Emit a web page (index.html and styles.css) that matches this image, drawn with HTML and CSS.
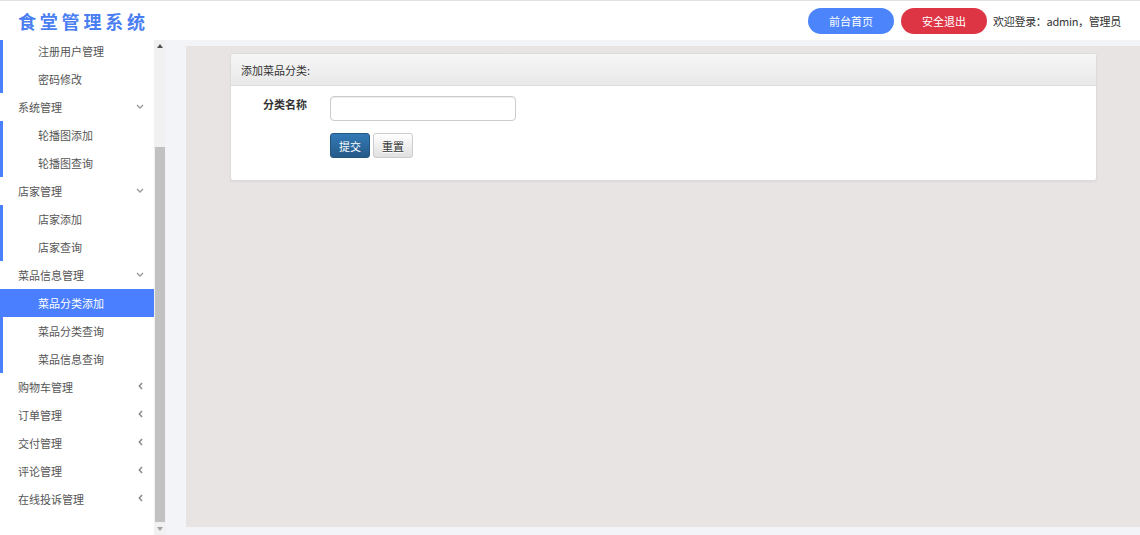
FILE: index.html
```html
<!DOCTYPE html>
<html lang="zh-CN">
<head>
<meta charset="utf-8">
<title>食堂管理系统</title>
<link rel="stylesheet" href="styles.css">
</head>
<body>
<header class="topbar">
  <div class="logo">食堂管理系统</div>
  <div class="top-right">
    <a class="pill pill-blue">前台首页</a>
    <a class="pill pill-red">安全退出</a>
    <span class="welcome">欢迎登录：admin，管理员</span>
  </div>
</header>
<div class="layout">
  <aside class="sidebar">
    <nav class="nav">
      <ul class="menu">
        <li class="group">
          <a class="sub">注册用户管理</a>
          <a class="sub">密码修改</a>
        </li>
        <li>
          <a class="top">系统管理<svg class="chev" viewBox="0 0 8 5" width="8" height="5"><path d="M1 1l3 3 3-3" fill="none" stroke="#9a9a9a" stroke-width="1.4"/></svg></a>
          <div class="group">
            <a class="sub">轮播图添加</a>
            <a class="sub">轮播图查询</a>
          </div>
        </li>
        <li>
          <a class="top">店家管理<svg class="chev" viewBox="0 0 8 5" width="8" height="5"><path d="M1 1l3 3 3-3" fill="none" stroke="#9a9a9a" stroke-width="1.4"/></svg></a>
          <div class="group">
            <a class="sub">店家添加</a>
            <a class="sub">店家查询</a>
          </div>
        </li>
        <li>
          <a class="top">菜品信息管理<svg class="chev" viewBox="0 0 8 5" width="8" height="5"><path d="M1 1l3 3 3-3" fill="none" stroke="#9a9a9a" stroke-width="1.4"/></svg></a>
          <div class="group">
            <a class="sub active">菜品分类添加</a>
            <a class="sub">菜品分类查询</a>
            <a class="sub">菜品信息查询</a>
          </div>
        </li>
        <li><a class="top">购物车管理<svg class="chev-l" viewBox="0 0 5 8" width="5" height="8"><path d="M4 1L1.3 4 4 7" fill="none" stroke="#8a8a8a" stroke-width="1.5"/></svg></a></li>
        <li><a class="top">订单管理<svg class="chev-l" viewBox="0 0 5 8" width="5" height="8"><path d="M4 1L1.3 4 4 7" fill="none" stroke="#8a8a8a" stroke-width="1.5"/></svg></a></li>
        <li><a class="top">交付管理<svg class="chev-l" viewBox="0 0 5 8" width="5" height="8"><path d="M4 1L1.3 4 4 7" fill="none" stroke="#8a8a8a" stroke-width="1.5"/></svg></a></li>
        <li><a class="top">评论管理<svg class="chev-l" viewBox="0 0 5 8" width="5" height="8"><path d="M4 1L1.3 4 4 7" fill="none" stroke="#8a8a8a" stroke-width="1.5"/></svg></a></li>
        <li><a class="top">在线投诉管理<svg class="chev-l" viewBox="0 0 5 8" width="5" height="8"><path d="M4 1L1.3 4 4 7" fill="none" stroke="#8a8a8a" stroke-width="1.5"/></svg></a></li>
      </ul>
    </nav>
    <div class="scrollbar">
      <svg class="arrow" viewBox="0 0 6 4" width="6" height="4"><path d="M0 4L3 0 6 4z" fill="#505050"/></svg>
      <div class="track"><div class="thumb"></div></div>
      <svg class="arrow" viewBox="0 0 6 4" width="6" height="4"><path d="M0 0L3 4 6 0z" fill="#a3a3a3"/></svg>
    </div>
  </aside>
  <main class="main">
    <div class="content">
      <section class="card">
        <div class="card-head">添加菜品分类:</div>
        <form class="card-body">
          <label class="label">分类名称</label>
          <input class="input" type="text">
          <div class="actions">
            <button type="button" class="btn btn-primary">提交</button>
            <button type="button" class="btn btn-default">重置</button>
          </div>
        </form>
      </section>
    </div>
  </main>
</div>
</body>
</html>
```

FILE: styles.css
```css
* { box-sizing: border-box; }
html, body { margin: 0; padding: 0; }
body {
  width: 1140px;
  height: 535px;
  overflow: hidden;
  font-family: "Noto Sans CJK SC", "Noto Sans", sans-serif;
  font-size: 11px;
  color: #333;
  background: #fff;
}
a { text-decoration: none; }

.topbar {
  height: 40px;
  border-top: 1px solid #e2e2e2;
  display: flex;
  align-items: center;
  justify-content: space-between;
  padding: 0 19px 0 18px;
  background: #fff;
}
.logo {
  font-size: 18px;
  font-weight: 700;
  letter-spacing: 3.8px;
  color: #4a7ef2;
  line-height: 1;
}
.top-right {
  display: flex;
  align-items: center;
  gap: 7px;
}
.pill {
  width: 86px;
  height: 26px;
  border-radius: 13px;
  color: #fff;
  display: flex;
  align-items: center;
  justify-content: center;
  font-size: 11px;
}
.pill-blue { background: #4c84fb; }
.pill-red { background: #de3545; }
.welcome { color: #333; font-size: 11px; letter-spacing: -0.28px; margin-left: -1px; }

.layout {
  display: flex;
  height: 495px;
}
.sidebar {
  width: 166px;
  display: flex;
  background: #fff;
}
.nav {
  width: 154px;
  overflow: hidden;
}
.menu {
  list-style: none;
  margin: -3px 0 0;
  padding: 0;
}
.menu a {
  display: flex;
  align-items: center;
  height: 28px;
  padding-bottom: 1px;
  color: #555;
  position: relative;
}
.top {
  padding-left: 18px;
}
.group {
  display: block;
  border-left: 3px solid #4a80ff;
}
.sub {
  padding-left: 35px;
  color: #666;
}
.menu a.active {
  background: #4a80ff;
  color: #fff;
  margin-left: -3px;
  padding-left: 38px;
}
.chev {
  position: absolute;
  left: 136px;
  top: 11px;
}
.chev-l {
  position: absolute;
  left: 138px;
  top: 9px;
}

.scrollbar {
  width: 12px;
  background: #f1f1f1;
  display: flex;
  flex-direction: column;
  align-items: center;
}
.arrow { margin: 4px 0; flex: none; }
.track {
  flex: 1;
  width: 100%;
  padding: 95px 1px 1px;
}
.thumb {
  width: 100%;
  height: 375px;
  background: #c1c1c1;
}

.main {
  flex: 1;
  background: #f3f4f7;
  padding: 6px 0 8px 20px;
}
.content {
  height: 100%;
  background: #e9e4e4;
  padding: 7px 43px 0 44px;
}
.card {
  background: #fff;
  border: 1px solid #dcdcdc;
  border-radius: 3px;
  box-shadow: 0 1px 2px rgba(0,0,0,0.06);
}
.card-head {
  height: 32px;
  display: flex;
  align-items: center;
  padding-left: 10px;
  background: linear-gradient(#f6f6f6, #e9e9e9);
  border-bottom: 1px solid #dcdcdc;
  border-radius: 3px 3px 0 0;
  color: #333;
}
.card-body {
  display: grid;
  grid-template-columns: 76px 186px;
  column-gap: 23px;
  row-gap: 12px;
  padding: 10px 0 22px 0;
  margin: 0;
}
.label {
  font-weight: 700;
  text-align: right;
  line-height: 16px;
  color: #333;
}
.input {
  width: 186px;
  height: 25px;
  border: 1px solid #ccc;
  border-radius: 4px;
  box-shadow: inset 0 1px 1px rgba(0,0,0,0.075);
  margin: 0;
}
.actions {
  grid-column: 2;
  display: flex;
  gap: 3px;
}
.btn {
  height: 25px;
  padding: 0;
  border-radius: 3px;
  font-family: inherit;
  font-size: 11px;
  white-space: nowrap;
  cursor: pointer;
}
.btn-primary {
  width: 40px;
  color: #fff;
  border: 1px solid #245580;
  background: linear-gradient(#337ab7, #265a88);
}
.btn-default {
  width: 40px;
  color: #333;
  border: 1px solid #ccc;
  background: linear-gradient(#fff, #e0e0e0);
  text-shadow: 0 1px 0 #fff;
}
```
